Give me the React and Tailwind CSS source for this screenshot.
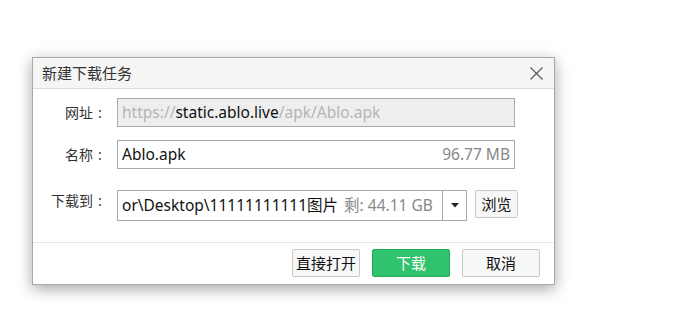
import React from 'react';

const font = { fontFamily: '"Noto Sans", "Noto Sans CJK SC", sans-serif' };

function Field({ label, children, labelClass = 'items-center' }) {
  return (
    <div className={`flex ${labelClass}`}>
      <div className="w-[74px] shrink-0 flex justify-end text-[14px] text-[#333]">
        <span>{label}</span>
        <span className="w-[14px] text-center">:</span>
      </div>
      <div className="ml-[10px] flex-1 flex">{children}</div>
    </div>
  );
}

export default function App() {
  return (
    <div className="min-h-[335px] bg-white pt-[57px] pl-[32px]" style={font}>
      <div className="w-[523px] h-[228px] bg-white border border-[#a8a8a8] shadow-[0_4px_14px_rgba(0,0,0,0.35)] flex flex-col">
        {/* title bar */}
        <div className="h-[31px] shrink-0 bg-[#f5f5f5] border-b border-[#dcdcdc] flex items-center justify-between pl-[9px] pr-[11px]">
          <span className="text-[15px] text-[#333]">新建下载任务</span>
          <svg width="13" height="13" viewBox="0 0 13 13" className="text-[#555]">
            <path d="M0.5 0.5L12.5 12.5M12.5 0.5L0.5 12.5" stroke="currentColor" strokeWidth="1.1" fill="none" />
          </svg>
        </div>

        {/* form */}
        <div className="flex flex-col pt-[9px] pr-[39px]">
          <Field label="网址">
            <div className="flex-1 h-[29px] bg-[#eeeeee] border border-[#a9a9a9] flex items-center pl-[4px] text-[15.5px] whitespace-nowrap">
              <span className="text-[#b5b5b5]">https://</span>
              <span className="text-[#111]">static.ablo.live</span>
              <span className="text-[#b5b5b5]">/apk/Ablo.apk</span>
            </div>
          </Field>
          <div className="mt-[13px]">
            <Field label="名称">
              <div className="flex-1 h-[29px] bg-white border border-[#a9a9a9] flex items-center justify-between pl-[4px] pr-[4px] text-[15.5px] whitespace-nowrap">
                <span className="text-[#111]">Ablo.apk</span>
                <span className="text-[#888]">96.77 MB</span>
              </div>
            </Field>
          </div>
          <div className="mt-[21px]">
            <Field label="下载到" labelClass="items-start">
              <div className="flex items-start">
                <div className="w-[350px] h-[31px] bg-white border border-[#a9a9a9] flex">
                  <div className="flex-1 flex items-center pl-[4px] text-[15.5px] whitespace-nowrap overflow-hidden">
                    <span className="text-[#111]">or\Desktop\11111111111图片</span>
                    <span className="text-[#888] ml-[6px]">剩: 44.11 GB</span>
                  </div>
                  <div className="w-[24px] border-l border-[#a9a9a9] flex items-center justify-center">
                    <svg width="8" height="5" viewBox="0 0 8 5"><path d="M0 0H8L4 4.5Z" fill="#222" /></svg>
                  </div>
                </div>
                <button className="ml-[8px] w-[43px] h-[28px] bg-[#f7f7f7] border border-[#c8c8c8] rounded-[2px] text-[15px] text-[#111] flex items-center justify-center">浏览</button>
              </div>
            </Field>
          </div>
        </div>

        {/* footer */}
        <div className="mt-[21px] border-t border-[#e6e6e6] flex justify-end gap-[12px] pt-[6px] pr-[14px]">
          <button className="w-[68px] h-[28px] bg-[#f7f7f7] border border-[#c8c8c8] rounded-[2px] text-[15px] text-[#111] flex items-center justify-center">直接打开</button>
          <button className="w-[78px] h-[28px] bg-[#2ec36c] border border-[#25a85b] rounded-[2px] text-[15px] text-white flex items-center justify-center">下载</button>
          <button className="w-[78px] h-[28px] bg-[#f7f7f7] border border-[#c8c8c8] rounded-[2px] text-[15px] text-[#111] flex items-center justify-center">取消</button>
        </div>
      </div>
    </div>
  );
}
